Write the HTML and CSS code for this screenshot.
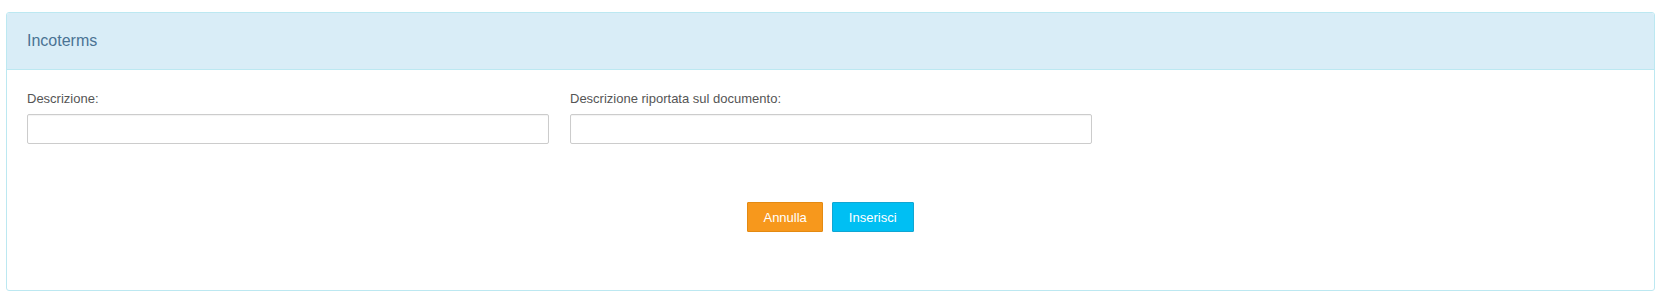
FILE: index.html
```html
<!DOCTYPE html>
<html lang="it">
<head>
<meta charset="utf-8">
<title>Incoterms</title>
<link rel="stylesheet" href="styles.css">
</head>
<body>
<div class="panel">
  <div class="panel-heading">Incoterms</div>
  <div class="panel-body">
    <div class="form-row">
      <div class="field">
        <label class="field-label">Descrizione:</label>
        <input class="field-input" type="text">
      </div>
      <div class="field">
        <label class="field-label">Descrizione riportata sul documento:</label>
        <input class="field-input" type="text">
      </div>
    </div>
    <div class="actions">
      <button class="btn btn-cancel" type="button">Annulla</button>
      <button class="btn btn-insert" type="button">Inserisci</button>
    </div>
  </div>
</div>
</body>
</html>
```

FILE: styles.css
```css
html, body {
  background: #ffffff;
}
body {
  margin: 12px 6px;
  font-family: "Liberation Sans", Arial, sans-serif;
  font-size: 13px;
  color: #555555;
}
.panel {
  border: 1px solid #bce8f1;
  border-radius: 3px;
  background: #ffffff;
}
.panel-heading {
  background: #d9edf7;
  color: #4a7394;
  font-size: 16px;
  line-height: 20px;
  height: 57px;
  box-sizing: border-box;
  padding: 18px 20px 0;
  border-bottom: 1px solid #bce8f1;
  border-radius: 2px 2px 0 0;
}
.panel-body {
  padding: 20px 20px 58px;
}
.form-row {
  display: grid;
  grid-template-columns: 522px 522px;
  column-gap: 21px;
}
.field {
  display: flex;
  flex-direction: column;
}
.field-label {
  line-height: 18px;
  margin-bottom: 6px;
  color: #555555;
}
.field-input {
  height: 30px;
  box-sizing: border-box;
  border: 1px solid #cccccc;
  border-radius: 2px;
  box-shadow: inset 0 1px 1px rgba(0,0,0,0.05);
  padding: 4px 8px;
  font-family: inherit;
  font-size: 13px;
  margin: 0;
}
.actions {
  margin-top: 58px;
  display: flex;
  justify-content: center;
  gap: 9px;
}
.btn {
  height: 30px;
  box-sizing: border-box;
  padding: 0 15px;
  font-family: "Liberation Sans", Arial, sans-serif;
  font-size: 13px;
  color: #ffffff;
  border-radius: 1px;
  cursor: pointer;
}
.btn-cancel {
  background: #f7981c;
  border: 1px solid #e48a12;
}
.btn-insert {
  background: #00bff3;
  border: 1px solid #10a6d3;
  padding: 0 16px;
}
```
